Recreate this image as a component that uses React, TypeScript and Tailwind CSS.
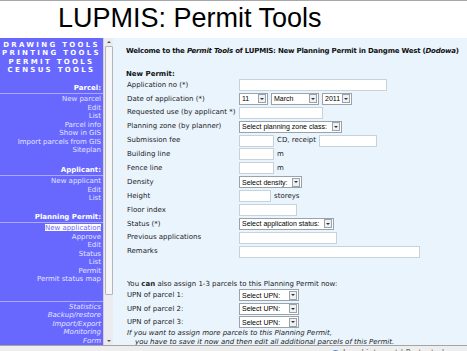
import React from "react";

const verdana = { fontFamily: '"DejaVu Sans", Verdana, sans-serif' };

const Sel = ({ w, text }: { w: number; text: string }) => (
  <div
    className="flex h-[12px] items-center justify-between border border-[#9aa3ab] bg-white pl-[2px] text-[7px] leading-none text-black"
    style={{ width: w, fontFamily: '"Liberation Sans", Arial, sans-serif' }}
  >
    <span className="whitespace-nowrap">{text}</span>
    <span className="flex h-[9px] w-[8px] items-center justify-center border border-[#9aa3ab] bg-[#eef0f2] mr-[1px]">
      <span className="h-0 w-0 border-x-[2px] border-t-[2px] border-x-transparent border-t-[#333]" />
    </span>
  </div>
);

const Inp = ({ w }: { w: number }) => (
  <div className="h-[12px] border border-[#c8d2db] bg-white" style={{ width: w }} />
);

const Row = ({ label, children }: { label: string; children?: React.ReactNode }) => (
  <div className="flex h-[13.9px] items-center">
    <div className="w-[113px] shrink-0 pl-[1px] whitespace-nowrap">{label}</div>
    <div className="flex items-center gap-[3px]">{children}</div>
  </div>
);

const UpnRow = ({ n }: { n: number }) => (
  <div className="flex h-[13.5px] items-center">
    <div className="w-[113px] shrink-0 pl-[1px]">UPN of parcel {n}:</div>
    <Sel w={60} text="Select UPN:" />
  </div>
);

const Section = ({ title, items, active }: { title?: string; items: string[]; active?: string }) => (
  <div>
    {title && (
      <div className="pr-[2px] text-right font-bold leading-[8.5px] text-white">{title}</div>
    )}
    <div className="border-b border-[#a9a9ff] pt-[1px]" />
    <div className="pt-[1px]">
      {items.map((it) => (
        <div key={it} className="pr-[2px] text-right leading-[8.5px] text-[#e4e4ff]">
          {it === active ? (
            <span className="bg-white text-[#6666ff] underline">{it}</span>
          ) : (
            it
          )}
        </div>
      ))}
    </div>
  </div>
);

export default function App() {
  return (
    <div className="relative flex h-[351px] w-[467px] flex-col overflow-hidden bg-white">
      {/* title */}
      <div className="h-[38px] shrink-0 border-t border-[#a8a8a8]">
        <div
          className="pl-[58px] pt-[2px] text-[27px] leading-[30px] text-black"
          style={{ fontFamily: '"Liberation Sans", Arial, sans-serif' }}
        >
          LUPMIS: Permit Tools
        </div>
      </div>

      <div className="flex min-h-0 flex-1 text-[7px]" style={verdana}>
        {/* sidebar */}
        <div className="w-[103px] shrink-0 overflow-hidden bg-[#6868ff] pt-[3px]">
          <div className="text-center font-bold leading-[8.4px] tracking-[2.3px] text-white">
            <div>DRAWING TOOLS</div>
            <div>PRINTING TOOLS</div>
            <div>PERMIT TOOLS</div>
            <div>CENSUS TOOLS</div>
          </div>
          <div className="mt-[9px]">
            <Section
              title="Parcel:"
              items={["New parcel", "Edit", "List", "Parcel info", "Show in GIS", "Import parcels from GIS", "Siteplan"]}
            />
          </div>
          <div className="mt-[11px]">
            <Section title="Applicant:" items={["New applicant", "Edit", "List"]} />
          </div>
          <div className="mt-[10px]">
            <Section
              title="Planning Permit:"
              items={["New application", "Approve", "Edit", "Status", "List", "Permit", "Permit status map"]}
              active="New application"
            />
          </div>
          <div className="mt-[16px] italic">
            <Section items={["Statistics", "Backup/restore", "Import/Export", "Monitoring", "Form"]} />
          </div>
        </div>

        {/* scrollbar */}
        <div className="flex w-[10px] shrink-0 flex-col items-center border-l border-[#d0d0d8] bg-[#ececf0]">
          <div className="flex h-[8px] items-center justify-center">
            <span className="h-0 w-0 border-x-[2px] border-b-[2px] border-x-transparent border-b-[#555]" />
          </div>
          <div className="h-[249px] w-[8px] rounded-[1px] border border-[#b4b4bc] bg-[#f6f6f8]" />
          <div className="flex-1" />
          <div className="flex h-[8px] items-center justify-center">
            <span className="h-0 w-0 border-x-[2px] border-t-[2px] border-x-transparent border-t-[#555]" />
          </div>
        </div>

        {/* main */}
        <div className="min-w-0 flex-1 overflow-hidden bg-[#eaf4fd] pl-[13px] pt-[8px] text-[#222]">
          <div className="whitespace-nowrap font-bold leading-[10px] tracking-[-0.22px] text-[#111]">
            Welcome to the <i>Permit Tools</i> of LUPMIS: New Planning Permit in Dangme West (<i>Dodowa</i>)
          </div>
          <div className="mt-[14px] font-bold leading-[8px] text-[#111]">New Permit:</div>
          <Row label="Application no (*)">
            <Inp w={148} />
          </Row>
          <Row label="Date of application (*)">
            <Sel w={29} text="11" />
            <Sel w={48} text="March" />
            <Sel w={30} text="2011" />
          </Row>
          <Row label="Requested use (by applicant *)">
            <Inp w={84} />
          </Row>
          <Row label="Planning zone (by planner)">
            <Sel w={103} text="Select planning zone class:" />
          </Row>
          <Row label="Submission fee">
            <Inp w={35} />
            <span>CD, receipt</span>
            <Inp w={58} />
          </Row>
          <Row label="Building line">
            <Inp w={35} />
            <span>m</span>
          </Row>
          <Row label="Fence line">
            <Inp w={35} />
            <span>m</span>
          </Row>
          <Row label="Density">
            <Sel w={63} text="Select density:" />
          </Row>
          <Row label="Height">
            <Inp w={32} />
            <span>storeys</span>
          </Row>
          <Row label="Floor index">
            <Inp w={58} />
          </Row>
          <Row label="Status (*)">
            <Sel w={95} text="Select application status:" />
          </Row>
          <Row label="Previous applications">
            <Inp w={98} />
          </Row>
          <Row label="Remarks">
            <Inp w={181} />
          </Row>

          <div className="mt-[21px] whitespace-nowrap pl-[1px] leading-[9px]">
            You <b>can</b> also assign 1-3 parcels to this Planning Permit now:
          </div>
          <UpnRow n={1} />
          <UpnRow n={2} />
          <UpnRow n={3} />
          <div className="whitespace-nowrap pl-[1px] italic leading-[9px]">
            If you want to assign more parcels to this Planning Permit,
          </div>
          <div className="whitespace-nowrap pl-[9px] italic leading-[9px]">
            you have to save it now and then edit all additional parcels of this Permit.
          </div>
        </div>
      </div>

      {/* status bar */}
      <div className="relative h-[6px] shrink-0 overflow-hidden border-t border-[#a4a4a4] bg-[#eeeeee]">
        <div className="absolute left-[331px] top-[2px] flex items-center gap-[3px] text-[8px] text-[#666]" style={verdana}>
          <span className="h-[9px] w-[9px] rounded-full bg-[#4a8fd0]" />
          <span>Local intranet | Protected</span>
        </div>
      </div>
    </div>
  );
}
